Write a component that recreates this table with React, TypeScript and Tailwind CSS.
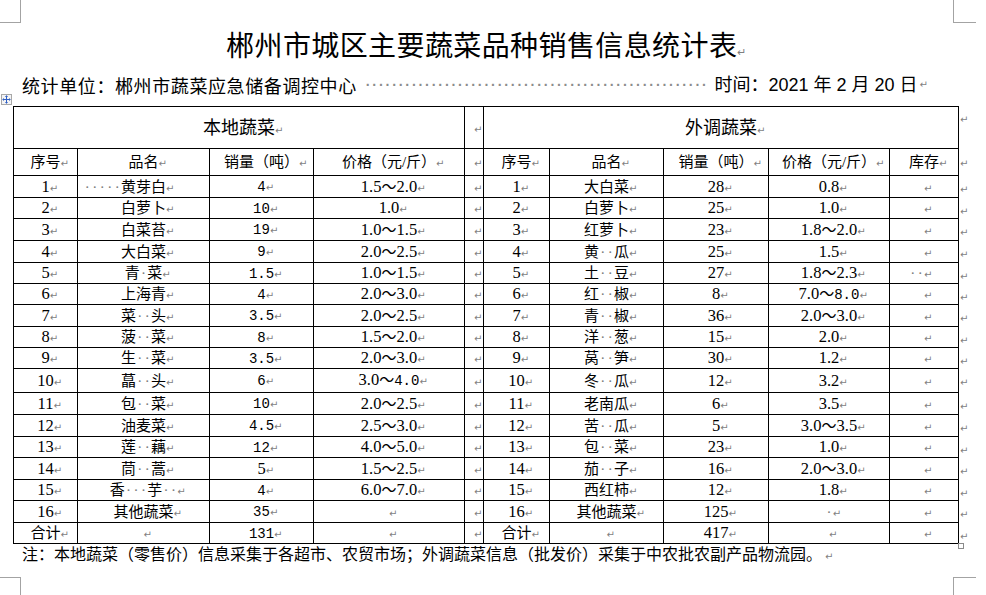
import React from 'react';

// widths of the table columns, last one holds the row-end marks
const COLS = ['w-[64px]', 'w-[132px]', 'w-[104px]', 'w-[151px]', 'w-[19px]', 'w-[66px]', 'w-[114px]', 'w-[105px]', 'w-[121px]', 'w-[69px]', 'w-[20px]'];

type Row = { h: string; left: string[]; right: string[] };

// '^' = leading dots hang left of the text, [..] = half-width SimSun digits, '·' = space mark
const rows: Row[] = [
  { h: 'h-[22px]', left: ['1', '^·····黄芽白', '[4]', '1.5～2.0'], right: ['1', '大白菜', '28', '0.8', ''] },
  { h: 'h-[21px]', left: ['2', '白萝卜', '[10]', '1.0'], right: ['2', '白萝卜', '25', '1.0', ''] },
  { h: 'h-[22px]', left: ['3', '白菜苔', '[19]', '1.0～1.5'], right: ['3', '红萝卜', '23', '1.8～2.0', ''] },
  { h: 'h-[22px]', left: ['4', '大白菜', '[9]', '2.0～2.5'], right: ['4', '黄··瓜', '25', '1.5', ''] },
  { h: 'h-[21px]', left: ['5', '青·菜', '[1.5]', '1.0～1.5'], right: ['5', '土··豆', '27', '1.8～2.3', '^··'] },
  { h: 'h-[21px]', left: ['6', '上海青', '[4]', '2.0～3.0'], right: ['6', '红··椒', '8', '7.0～[8.0]', ''] },
  { h: 'h-[22px]', left: ['7', '菜··头', '[3.5]', '2.0～2.5'], right: ['7', '青··椒', '36', '2.0～3.0', ''] },
  { h: 'h-[21px]', left: ['8', '菠··菜', '[8]', '1.5～2.0'], right: ['8', '洋··葱', '15', '2.0', ''] },
  { h: 'h-[21px]', left: ['9', '生··菜', '[3.5]', '2.0～3.0'], right: ['9', '莴··笋', '30', '1.2', ''] },
  { h: 'h-[24px]', left: ['10', '蕌··头', '[6]', '3.0～[4.0]'], right: ['10', '冬··瓜', '12', '3.2', ''] },
  { h: 'h-[22px]', left: ['11', '包··菜', '[10]', '2.0～2.5'], right: ['11', '老南瓜', '6', '3.5', ''] },
  { h: 'h-[22px]', left: ['12', '油麦菜', '[4.5]', '2.5～3.0'], right: ['12', '苦··瓜', '5', '3.0～3.5', ''] },
  { h: 'h-[21px]', left: ['13', '莲··藕', '[12]', '4.0～5.0'], right: ['13', '包··菜', '23', '1.0', ''] },
  { h: 'h-[22px]', left: ['14', '茼··蒿', '5', '1.5～2.5'], right: ['14', '茄··子', '16', '2.0～3.0', ''] },
  { h: 'h-[21px]', left: ['15', '香···芋··', '[4]', '6.0～7.0'], right: ['15', '西红柿', '12', '1.8', ''] },
  { h: 'h-[22px]', left: ['16', '其他蔬菜', '[35]', ''], right: ['16', '其他蔬菜', '125', '·', ''] },
  { h: 'h-[21px]', left: ['合计', '', '[131]', ''], right: ['合计', '', '417', '', ''] },
];

const heads = ['序号', '品名', '销量（吨）', '价格（元/斤）'];

function Mark({ hang = true }: { hang?: boolean }) {
  return (
    <span className={`${hang ? 'inline-block w-0' : 'inline-block'} whitespace-nowrap font-['DejaVu_Sans',sans-serif] text-[10px] leading-none text-[#7f7f7f]`}>
      ↵
    </span>
  );
}

function Dot({ k }: { k: number }) {
  return <span key={k} className="inline-block w-[7.5px] shrink-0 text-center text-[#7a7a7a]">·</span>;
}

function Txt({ s }: { s: string }) {
  let body = s;
  let lead = '';
  if (body.startsWith('^')) {
    lead = body.slice(1).match(/^·*/)![0];
    body = body.slice(1 + lead.length);
  }
  const out: React.ReactNode[] = [];
  const re = /\[([^\]]*)\]|·|[0-9.]+|[^[·0-9.]+/g;
  let m: RegExpExecArray | null;
  let i = 0;
  while ((m = re.exec(body))) {
    if (m[1] !== undefined) {
      out.push(<span key={i} className="font-['Liberation_Mono',monospace] text-[14px]">{m[1]}</span>);
    } else if (m[0] === '·') {
      out.push(<Dot key={i} k={i} />);
    } else if (/^[0-9.]+$/.test(m[0])) {
      out.push(<span key={i} className="text-[16.5px]">{m[0]}</span>);
    } else {
      out.push(<span key={i}>{m[0]}</span>);
    }
    i++;
  }
  return (
    <>
      {lead && (
        <span className="inline-flex w-0 justify-end">
          {lead.split('').map((_, j) => <Dot key={j} k={j} />)}
        </span>
      )}
      {out}
      <Mark />
    </>
  );
}

const td = 'border border-black p-0 text-center align-middle whitespace-nowrap';

export default function App() {
  return (
    <div className="relative w-[986px] h-[595px] overflow-hidden bg-white text-black font-['Noto_Sans_CJK_SC',sans-serif]">
      {/* page corner marks */}
      <div className="absolute left-0 top-0 w-[21px] h-[23px] border-r border-b border-[#a3a3a3]" />
      <div className="absolute left-[953px] top-0 w-[23px] h-[23px] border-l border-b border-[#a3a3a3]" />
      <div className="absolute left-0 top-[577px] w-[21px] h-[18px] border-r border-t border-[#a3a3a3]" />
      <div className="absolute left-[953px] top-[577px] w-[23px] h-[18px] border-l border-t border-[#a3a3a3]" />

      <div className="pt-[27px]">
        <h1 className="h-[34px] pl-[20px] pr-[33px] text-center text-[28px] leading-[34px] tracking-[0.4px] font-normal">
          郴州市城区主要蔬菜品种销售信息统计表
          <span className="font-['DejaVu_Sans',sans-serif] text-[11px] leading-none text-[#7f7f7f]">↵</span>
        </h1>

        <div className="mt-[13px] flex h-[22px] items-center pl-[22px] pr-[58px] text-[18px] leading-[22px] whitespace-nowrap">
          <span className="tracking-[0.6px]">统计单位：郴州市蔬菜应急储备调控中心</span>
          <span className="ml-[8px] flex flex-1 font-['Liberation_Sans',sans-serif] text-[14px] font-bold">
            {Array.from({ length: 52 }).map((_, j) => (
              <span key={j} className="inline-block w-[6.6px] shrink-0 text-center text-[#8c8c8c]">·</span>
            ))}
          </span>
          <span className="font-['Liberation_Sans','Noto_Sans_CJK_SC',sans-serif]">时间：2021 年 2 月 20 日</span>
          <span className="ml-[2px] font-['DejaVu_Sans',sans-serif] text-[10px] leading-none text-[#7f7f7f]">↵</span>
        </div>

        <div className="relative mt-[10px] ml-[13px]">
          {/* table move handle */}
          <div className="absolute left-[-12px] top-[-12px] w-[11px] h-[11px] border border-[#a8a8a8] bg-[#f4f4f4]">
            <svg viewBox="0 0 9 9" className="w-[9px] h-[9px]">
              <path d="M4.5 0.8v7.4M0.8 4.5h7.4" stroke="#2f5fc4" strokeWidth="1" fill="none" />
              <path d="M4.5 0.3l-1.6 1.7h3.2zM4.5 8.7l-1.6-1.7h3.2zM0.3 4.5l1.7-1.6v3.2zM8.7 4.5l-1.7-1.6v3.2z" fill="#2f5fc4" />
            </svg>
          </div>
          {/* table resize handle */}
          <div className="absolute left-[945px] bottom-[-5px] w-[6px] h-[6px] border border-[#8a8a8a] bg-white" />

          <table className="table-fixed border-collapse w-[965px] text-[15px] leading-[14px] font-['Liberation_Serif','Noto_Sans_CJK_SC',serif]">
            <colgroup>
              {COLS.map((c, i) => <col key={i} className={c} />)}
            </colgroup>
            <tbody>
              <tr className="h-[42px]">
                <td colSpan={4} className={`${td} text-[18px] font-['Noto_Sans_CJK_SC',sans-serif]`}>本地蔬菜<Mark /></td>
                <td className={td}><Mark /></td>
                <td colSpan={5} className={`${td} text-[18px] font-['Noto_Sans_CJK_SC',sans-serif]`}>外调蔬菜<Mark /></td>
                <td className="p-0 pl-[1px] pt-[4px] align-top text-left"><Mark hang={false} /></td>
              </tr>
              <tr className="h-[27px]">
                {heads.map(h => <td key={'l' + h} className={td}><Txt s={h} /></td>)}
                <td className={td}><Mark /></td>
                {[...heads, '库存'].map(h => <td key={'r' + h} className={td}><Txt s={h} /></td>)}
                <td className="p-0 pl-[1px] pt-[6px] align-top text-left"><Mark hang={false} /></td>
              </tr>
              {rows.map((r, i) => (
                <tr key={i} className={r.h}>
                  {r.left.map((c, j) => <td key={'l' + j} className={td}><Txt s={c} /></td>)}
                  <td className={td}><Mark /></td>
                  {r.right.map((c, j) => <td key={'r' + j} className={td}><Txt s={c} /></td>)}
                  <td className="p-0 pl-[1px] pt-[5px] align-top text-left"><Mark hang={false} /></td>
                </tr>
              ))}
            </tbody>
          </table>
        </div>

        <p className="h-[18px] pl-[22px] text-[16px] leading-[18px] whitespace-nowrap">
          注：本地蔬菜（零售价）信息采集于各超市、农贸市场；外调蔬菜信息（批发价）采集于中农批农副产品物流园。
          <span className="ml-[3px] font-['DejaVu_Sans',sans-serif] text-[10px] leading-none text-[#7f7f7f]">↵</span>
        </p>
      </div>
    </div>
  );
}
